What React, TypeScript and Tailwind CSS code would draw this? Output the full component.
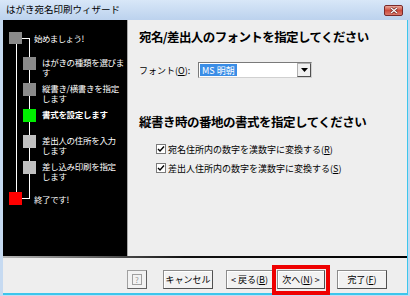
import React from 'react';

type Step = { lines: string[]; color: string; bold?: boolean };

const SUB_STEPS: Step[] = [
  { lines: ['はがきの種類を選びま', 'す'], color: 'bg-[#8a8a8a]' },
  { lines: ['縦書き/横書きを指定', 'します'], color: 'bg-[#8a8a8a]' },
  { lines: ['書式を設定します'], color: 'bg-[#00ee00]', bold: true },
  { lines: ['差出人の住所を入力', 'します'], color: 'bg-[#c0c0c0]' },
  { lines: ['差し込み印刷を指定', 'します'], color: 'bg-[#c0c0c0]' },
];

const Btn: React.FC<{ className?: string; children: React.ReactNode }> = ({ className = '', children }) => (
  <div
    className={`h-[19px] flex items-center justify-center bg-[#f2f2f2] border border-[#8c8c8c] border-r-[#505050] border-b-[#505050] shadow-[inset_1px_1px_0_#ffffff] text-[9px] leading-none text-black ${className}`}
  >
    {children}
  </div>
);

const Check: React.FC = () => (
  <div className="w-[10px] h-[10px] bg-white border border-[#7a7a7a] flex items-center justify-center">
    <svg width="8" height="8" viewBox="0 0 8 8">
      <polyline points="1,4 3,6 7,1.5" fill="none" stroke="#000" strokeWidth="1.4" />
    </svg>
  </div>
);

const App: React.FC = () => {
  return (
    <div className="w-[410px] h-[296px] flex flex-col bg-[#c6daf1] font-['Noto_Sans_CJK_JP',sans-serif] overflow-hidden">
      {/* title bar */}
      <div className="h-[20px] flex items-center justify-between pl-[6px] pr-[7px] bg-gradient-to-b from-[#d8e7f8] to-[#bcd2ee]">
        <span className="text-[9.5px] text-black leading-none">はがき宛名印刷ウィザード</span>
        <div className="w-[19px] h-[11px] rounded-[2px] border border-[#7a2a2a] bg-gradient-to-b from-[#e8a89c] via-[#cc4b3c] to-[#d9786c] flex items-center justify-center">
          <svg width="8" height="7" viewBox="0 0 8 7">
            <path d="M1 1 L7 6 M7 1 L1 6" stroke="#5a1a1a" strokeWidth="2.4" />
            <path d="M1 1 L7 6 M7 1 L1 6" stroke="#ffffff" strokeWidth="1.3" />
          </svg>
        </div>
      </div>

      <div className="flex-1 flex pl-[3px] pr-[2px] pb-[1px] bg-[#c6daf1]">
        <div className="flex-1 flex flex-col bg-[#eeeeee] border-r border-b-[2px] border-[#3cc6ec]">
          <div className="h-[236px] flex">
            {/* left step panel */}
            <div className="relative w-[124px] h-full bg-black text-white pt-[12px]">
              <svg className="absolute inset-0" width="124" height="236">
                <path d="M13.5 24 V172 M19 18.5 H27 M26.5 18 V179 M19 178.5 H27" stroke="#ffffff" strokeWidth="1" fill="none" />
              </svg>
              <div className="relative flex items-center h-[12px] pl-[6px]">
                <div className="w-[13px] h-[12px] bg-[#8a8a8a]" />
                <span className="ml-[12px] text-[8.5px] leading-[10px] tracking-[-0.6px]">始めましょう!</span>
              </div>
              <div className="relative mt-[13px] flex flex-col">
                {SUB_STEPS.map((s, i) => (
                  <div key={i} className="h-[26px] flex items-start pl-[20px]">
                    <div className={`w-[13px] h-[13px] shrink-0 ${s.color}`} />
                    <div className={`ml-[6px] text-[8.5px] leading-[10px] tracking-[-0.3px] whitespace-nowrap ${s.bold ? 'font-bold' : ''}`}>
                      {s.lines.map((l, j) => (
                        <React.Fragment key={j}>
                          {j > 0 && <br />}
                          {l}
                        </React.Fragment>
                      ))}
                    </div>
                  </div>
                ))}
              </div>
              <div className="relative mt-[5px] flex items-center h-[13px] pl-[6px]">
                <div className="w-[13px] h-[13px] bg-[#ff0000]" />
                <span className="ml-[12px] text-[8.5px] leading-[10px] tracking-[-0.4px]">終了です!</span>
              </div>
            </div>

            {/* right content */}
            <div className="flex-1 flex flex-col pt-[9px] pl-[11px] border-l border-[#a8a8a8] text-black">
              <div className="text-[12.5px] leading-[16px] font-bold tracking-[-0.6px] whitespace-nowrap">
                宛名/差出人のフォントを指定してください
              </div>
              <div className="mt-[17px] flex items-center h-[16px]">
                <span className="w-[59px] text-[9px] leading-none">
                  フォント(<span className="underline">O</span>):
                </span>
                <div className="w-[114px] h-[16px] flex items-center bg-white border border-[#7a7a7a] border-r-[#d0d0d0] border-b-[#d0d0d0]">
                  <span className="ml-[1px] h-[12px] px-[2px] flex items-center bg-[#3a8de6] text-white text-[9px] leading-none">
                    MS 明朝
                  </span>
                  <div className="ml-auto w-[14px] h-[14px] bg-[#f0f0f0] border border-[#b0b0b0] border-r-[#505050] border-b-[#505050] flex items-center justify-center">
                    <svg width="7" height="4" viewBox="0 0 7 4">
                      <path d="M0 0 H7 L3.5 4 Z" fill="#000" />
                    </svg>
                  </div>
                </div>
              </div>
              <div className="mt-[36px] text-[12.5px] leading-[16px] font-bold tracking-[-0.5px] whitespace-nowrap">
                縦書き時の番地の書式を指定してください
              </div>
              <div className="mt-[13px] pl-[17px] flex items-center h-[12px] gap-[2px]">
                <Check />
                <span className="text-[9px] leading-none whitespace-nowrap">
                  宛名住所内の数字を漢数字に変換する(<span className="underline">R</span>)
                </span>
              </div>
              <div className="mt-[7px] pl-[17px] flex items-center h-[12px] gap-[2px]">
                <Check />
                <span className="text-[9px] leading-none whitespace-nowrap">
                  差出人住所内の数字を漢数字に変換する(<span className="underline">S</span>)
                </span>
              </div>
            </div>
          </div>

          {/* separator */}
          <div className="h-[2px] bg-[linear-gradient(to_right,#b8b8b8,#111111_45%,#000000)]" />

          {/* buttons */}
          <div className="flex-1 flex items-start pt-[12px] pl-[124px]">
            <div className="w-[20px] h-[19px] flex items-center justify-center bg-[#f2f2f2] border border-[#a0a0a0] border-r-[#606060] border-b-[#606060]">
              <span className="w-[10px] h-[11px] border border-[#a0a0a0] flex items-center justify-center text-[8px] leading-none text-[#9a9a9a]">
                ?
              </span>
            </div>
            <Btn className="ml-[16px] w-[50px]">キャンセル</Btn>
            <Btn className="ml-[13px] w-[47px]">
              &lt; 戻る(<span className="underline">B</span>)
            </Btn>
            <div className="relative ml-[4px]">
              <Btn className="w-[48px]">
                次へ(<span className="underline">N</span>) &gt;
              </Btn>
              <div className="absolute left-[-5px] right-[-5px] top-[-5px] bottom-[-6px] border-[4px] border-[#ee0000]" />
            </div>
            <Btn className="ml-[12px] w-[50px]">
              完了(<span className="underline">F</span>)
            </Btn>
          </div>
        </div>
      </div>
    </div>
  );
};

export default App;
